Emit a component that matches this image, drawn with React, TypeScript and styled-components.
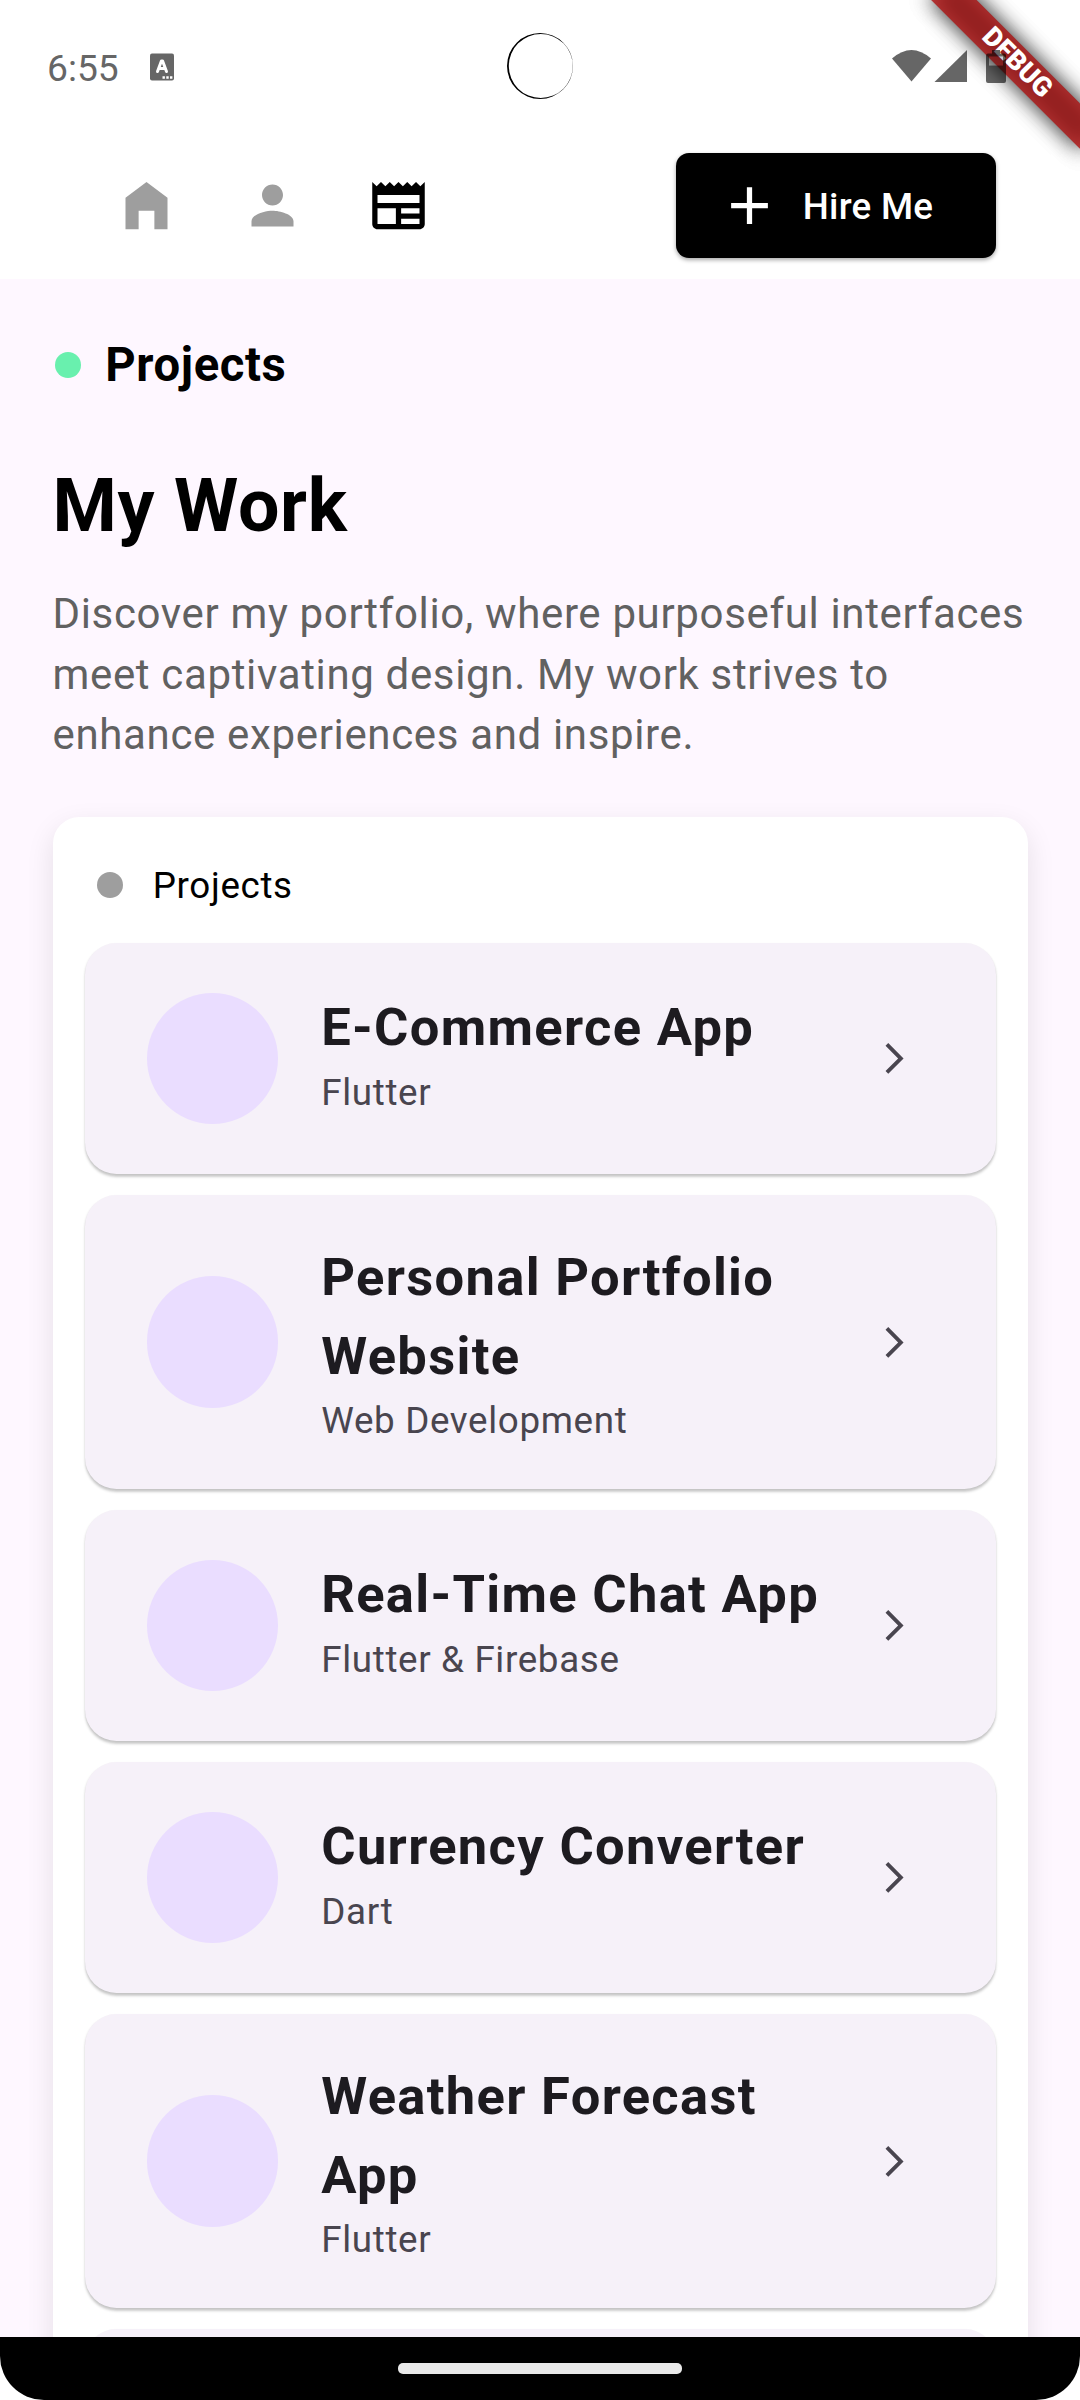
import React from "react";
import styled, { createGlobalStyle } from "styled-components";

const Global = createGlobalStyle`
  *, *::before, *::after { box-sizing: border-box; }
  body { margin: 0; background: #fff; font-family: Roboto, "Noto Sans", sans-serif; }
  h1, h2, p { margin: 0; }
`;

const Screen = styled.div`
  width: 1080px;
  height: 2400px;
  display: flex;
  flex-direction: column;
  position: relative;
  overflow: hidden;
  background: #fef7ff;
`;

const Header = styled.header`
  flex: none;
  height: 279px;
  background: #fff;
`;

const StatusBar = styled.div`
  height: 136px;
  padding: 0 72px 2px 47px;
  display: flex;
  align-items: center;
  color: #666;
`;

const Clock = styled.span`
  font-size: 37.2px;
  line-height: 44px;
  width: 103px;
  padding-top: 2px;
`;

const Spacer = styled.div`
  flex: 1;
`;

const StatusIcons = styled.div`
  display: flex;
  height: 34px;
  position: relative;
  z-index: 3;
`;

const Camera = styled.svg`
  position: absolute;
  left: 506px;
  top: 32px;
`;

const Nav = styled.nav`
  height: 143px;
  padding: 17px 84px 0 115px;
  display: flex;
  align-items: flex-start;
`;

const NavIcons = styled.div`
  display: flex;
  gap: 63px;
  padding-top: 21.4px;
`;

const NavIcon = styled.svg<{ $active?: boolean }>`
  width: 63px;
  height: 63px;
  fill: ${(p) => (p.$active ? "#000" : "#9e9e9e")};
`;

const HireButton = styled.button`
  width: 319.7px;
  height: 105px;
  border: 0;
  border-radius: 13px;
  background: #000;
  color: #fff;
  display: flex;
  align-items: center;
  padding: 0 0 0 41.7px;
  gap: 21.7px;
  font: 500 36.75px/52px Roboto, sans-serif;
  letter-spacing: 0.26px;
  box-shadow: 0 2px 4px rgba(0, 0, 0, 0.35);
`;

const HireLabel = styled.span`
  padding-top: 2px;
`;

const Content = styled.main`
  flex: 1;
  min-height: 0;
  overflow: hidden;
  padding: 52px 52.5px 0;
`;

const Eyebrow = styled.div`
  display: flex;
  align-items: center;
  height: 68px;
  padding-left: 2.5px;
  gap: 24px;
`;

const Dot = styled.span<{ $color: string }>`
  width: 26.25px;
  height: 26.25px;
  border-radius: 50%;
  background: ${(p) => p.$color};
`;

const EyebrowText = styled.span`
  font-size: 47.25px;
  font-weight: 700;
  line-height: 68px;
  letter-spacing: 0.6px;
  color: #000;
`;

const Title = styled.h1`
  margin-top: 55px;
  font-size: 73.5px;
  font-weight: 700;
  line-height: 105px;
  letter-spacing: 0.66px;
  color: #000;
`;

const Intro = styled.p`
  margin-top: 25.2px;
  font-size: 42px;
  line-height: 60.5px;
  letter-spacing: 0.656px;
  color: #616161;
  white-space: nowrap;
`;

const Panel = styled.section`
  margin-top: 51.3px;
  height: 1700px;
  padding: 31px 31.5px 31px 32px;
  border-radius: 26.25px;
  background: #fff;
  box-shadow: 0 10px 28px rgba(0, 0, 0, 0.1);
`;

const PanelHead = styled.div`
  display: flex;
  align-items: center;
  height: 74px;
  padding: 0 0 0 12.5px;
  gap: 29.5px;
  margin-bottom: 21px;
`;

const PanelLabel = styled.span`
  padding-top: 2.500px;
  font-size: 36.75px;
  line-height: 52px;
  letter-spacing: 0.656px;
  color: #000;
`;

const List = styled.div`
  display: flex;
  flex-direction: column;
  gap: 21px;
`;

const Card = styled.article<{ $tall?: boolean }>`
  height: ${(p) => (p.$tall ? 294 : 231)}px;
  flex: none;
  border-radius: 31.5px;
  background: #f6f1f9;
  padding: 0 83.5px 0 62.7px;
  display: flex;
  align-items: center;
  box-shadow: 0 2.6px 2.6px rgba(0, 0, 0, 0.2), 0 1px 2px rgba(0, 0, 0, 0.05);
`;

const Avatar = styled.div`
  flex: none;
  width: 131.25px;
  height: 131.25px;
  border-radius: 50%;
  background: #eaddff;
`;

const CardText = styled.div<{ $tall?: boolean }>`
  flex: 1;
  margin-left: 42.8px;
  padding-top: ${(p) => (p.$tall ? 2 : 0)}px;
  padding-bottom: ${(p) => (p.$tall ? 0 : 10)}px;
  white-space: pre-line;
`;

const CardTitle = styled.h2`
  font-size: 52.5px;
  font-weight: 700;
  line-height: 78.75px;
  letter-spacing: 1.3125px;
  color: #1d1b20;
`;

const CardSub = styled.p`
  font-size: 36.75px;
  line-height: 52.5px;
  letter-spacing: 0.656px;
  color: #49454f;
`;

const Chevron = styled.svg`
  flex: none;
  width: 36.75px;
  height: 36.75px;
  fill: #49454f;
`;

const BottomBar = styled.footer`
  flex: none;
  height: 63px;
  background: #fff;
`;

const BottomInner = styled.div`
  height: 63px;
  background: #000;
  border-radius: 0 0 44px 44px;
  display: flex;
  justify-content: center;
  padding-top: 26px;
`;

const Handle = styled.div`
  width: 284px;
  height: 11px;
  border-radius: 5px;
  background: #e9e9e9;
`;

const RibbonClip = styled.div`
  position: absolute;
  top: 0;
  right: 0;
  width: 240px;
  height: 240px;
  overflow: hidden;
  pointer-events: none;
`;

const Ribbon = styled.div`
  position: absolute;
  width: 210px;
  height: 31.5px;
  left: 71.9px;
  top: 47.4px;
  transform: rotate(45deg);

  &::before {
    content: "";
    position: absolute;
    inset: 0;
    background: rgba(0, 0, 0, 0.5);
    filter: blur(10.4px);
  }
`;

const RibbonText = styled.div`
  position: relative;
  height: 31.5px;
  background: rgba(183, 28, 28, 0.627);
  color: #fff;
  text-align: center;
  font-size: 27px;
  line-height: 31.5px;
  font-weight: 900;
`;

const projects = [
  { title: "E-Commerce App", sub: "Flutter" },
  { title: "Personal Portfolio\nWebsite", sub: "Web Development", tall: true },
  { title: "Real-Time Chat App", sub: "Flutter & Firebase" },
  { title: "Currency Converter", sub: "Dart" },
  { title: "Weather Forecast\nApp", sub: "Flutter", tall: true },
  { title: "", sub: "" },
];

export default function App() {
  return (
    <Screen>
      <Global />
      <Header>
        <StatusBar>
          <Clock>6:55</Clock>
          <svg width="24" height="28" viewBox="0 0 24 28">
            <rect x="0" y="0.5" width="24" height="27" rx="2" fill="#666" />
            <path d="M7.5 18.500 L11.400 8 H12.600 L16.500 18.500 M9.500 15.500 H14.500" fill="none" stroke="#fff" strokeWidth="3" strokeLinecap="round" strokeLinejoin="round" />
            <path d="M12.500 24.500h2.400M16.300 24.500h2.400M20 24.500h2.400" stroke="#fff" strokeWidth="2.500" />
          </svg>
          <Spacer />
          <StatusIcons>
            <svg width="116" height="34" viewBox="0 0 116 34" fillOpacity="0.6">
              <path d="M0 8.500 Q19.500 -8.500 39 8.500 L19.500 31.500Z" />
              <path d="M75 0V32H42.500Z" />
              <path fillRule="evenodd" d="M96 3.500h4V0h8v3.500h4q2 0 2 2v25.500q0 2-2 2H96q-2 0-2-2V5.500q0-2 2-2zM97 6.500v9h14v-9z" />
              <path fillOpacity="0.18" d="M97 6.500v9h14v-9z" />
            </svg>
          </StatusIcons>
        </StatusBar>
        <Nav>
          <NavIcons>
            <NavIcon viewBox="0 0 24 24">
              <path d="M4 21V9l8-6 8 6v12h-5v-7H9v7z" />
            </NavIcon>
            <NavIcon viewBox="0 0 24 24">
              <path d="M12 12c2.210 0 4-1.790 4-4s-1.790-4-4-4-4 1.790-4 4 1.790 4 4 4zm0 2c-2.670 0-8 1.340-8 4v2h16v-2c0-2.660-5.330-4-8-4z" />
            </NavIcon>
            <NavIcon viewBox="0 0 24 24" $active>
              <path d="M22 3l-1.670 1.670L18.670 3 17 4.670 15.330 3l-1.660 1.670L12 3l-1.670 1.670L8.670 3 7 4.670 5.330 3 3.670 4.670 2 3v16c0 1.100.9 2 2 2h16c1.100 0 2-.9 2-2V3zM11 19H4v-6h7v6zm9 0h-7v-2h7v2zm0-4h-7v-2h7v2zm0-4H4V8h16v3z" />
            </NavIcon>
          </NavIcons>
          <Spacer />
          <HireButton>
            <svg width="63" height="63" viewBox="0 0 24 24" fill="#fff">
              <path d="M19 13h-6v6h-2v-6H5v-2h6V5h2v6h6v2z" />
            </svg>
            <HireLabel>Hire Me</HireLabel>
          </HireButton>
        </Nav>
      </Header>
      <Content>
        <Eyebrow>
          <Dot $color="#69f0ae" />
          <EyebrowText>Projects</EyebrowText>
        </Eyebrow>
        <Title>My Work</Title>
        <Intro>
          Discover my portfolio, where purposeful interfaces
          <br />
          meet captivating design. My work strives to
          <br />
          enhance experiences and inspire.
        </Intro>
        <Panel>
          <PanelHead>
            <Dot $color="#9e9e9e" />
            <PanelLabel>Projects</PanelLabel>
          </PanelHead>
          <List>
            {projects.map((p, i) => (
              <Card key={i} $tall={p.tall}>
                <Avatar />
                <CardText $tall={p.tall}>
                  <CardTitle>{p.title}</CardTitle>
                  <CardSub>{p.sub}</CardSub>
                </CardText>
                <Chevron viewBox="0 0 24 24">
                  <path d="M6.230 20.230 8 22 18 12 8 2 6.230 3.770 14.460 12z" />
                </Chevron>
              </Card>
            ))}
          </List>
        </Panel>
      </Content>
      <BottomBar>
        <BottomInner>
          <Handle />
        </BottomInner>
      </BottomBar>
      <Camera width="68" height="68" viewBox="0 0 68 68">
        <path fillRule="evenodd" d="M34 1a33 33 0 1 0 0 66a33 33 0 1 0 0-66zM34.800 2a32 32 0 1 1 0 64a32 32 0 1 1 0-64z" />
      </Camera>
      <RibbonClip>
        <Ribbon>
          <RibbonText />
        </Ribbon>
        <Ribbon>
          <RibbonText>DEBUG</RibbonText>
        </Ribbon>
      </RibbonClip>
    </Screen>
  );
}
